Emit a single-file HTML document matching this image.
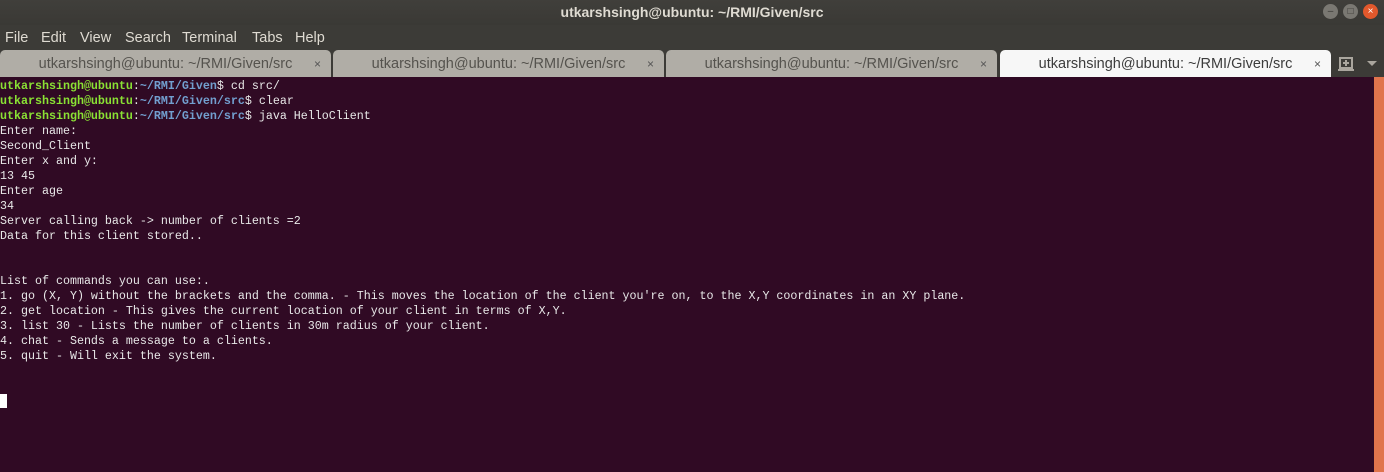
<!DOCTYPE html>
<html><head><style>
*{margin:0;padding:0;box-sizing:border-box}
body{width:1384px;height:472px;overflow:hidden;background:#300a24;font-family:"Liberation Sans",sans-serif;position:relative}
#title{position:absolute;left:0;top:0;width:1384px;height:25px;background:linear-gradient(#403f3b,#3a3935);color:#dfdbd2;font-weight:bold;font-size:14px;text-align:center;line-height:24px}
#menu{position:absolute;left:0;top:25px;width:1384px;height:52px;background:#3c3b37}
#menu span{position:absolute;top:5px;color:#dfdbd2;font-size:14.5px}
.tab{position:absolute;top:50px;height:27px;width:331px;background:#b0ada6;border-radius:5px 5px 0 0;color:#55534e;font-size:14.5px;line-height:28px;text-align:center}
.tab.act{background:#f7f7f7;color:#3c3c3c}
.tab .x{position:absolute;right:10px;top:0;font-size:12px;color:#555}
#term{position:absolute;left:0;top:79px;font-family:"Liberation Mono",monospace;font-size:11.67px;line-height:15px;color:#e8e8e8;white-space:pre}
.g{color:#8ae234;font-weight:bold}.b{color:#729fcf;font-weight:bold}
#sb{position:absolute;left:1374px;top:77px;width:10px;height:395px;background:#e0744c}
.wb{position:absolute;top:4px;width:15px;height:15px;border-radius:50%;background:#7a7872;color:#3a3935;font-size:10px;text-align:center;line-height:15px}
</style></head><body>
<div id="title">utkarshsingh@ubuntu: ~/RMI/Given/src</div>
<div class="wb" style="left:1323px">&#8211;</div>
<div class="wb" style="left:1343px">&#9633;</div>
<div class="wb" style="left:1363px;background:#e2582c;color:#fff">&#215;</div>
<div id="menu">
<span style="left:5px">File</span><span style="left:41px">Edit</span><span style="left:80px">View</span><span style="left:125px">Search</span><span style="left:182px">Terminal</span><span style="left:252px">Tabs</span><span style="left:295px">Help</span>
</div>
<div class="tab" style="left:0">utkarshsingh@ubuntu: ~/RMI/Given/src<span class="x">&#215;</span></div>
<div class="tab" style="left:333px">utkarshsingh@ubuntu: ~/RMI/Given/src<span class="x">&#215;</span></div>
<div class="tab" style="left:666px">utkarshsingh@ubuntu: ~/RMI/Given/src<span class="x">&#215;</span></div>
<div class="tab act" style="left:1000px">utkarshsingh@ubuntu: ~/RMI/Given/src<span class="x">&#215;</span></div>
<svg style="position:absolute;left:1338px;top:55px" width="40" height="18"><rect x="2" y="3" width="12" height="10" fill="none" stroke="#aaa69e" stroke-width="2"/><path d="M8 5v6M5 8h6M0 15h16" stroke="#aaa69e" stroke-width="2"/><path d="M29 6h10l-5 5z" fill="#aaa69e"/></svg>
<div id="term"><span class="g">utkarshsingh@ubuntu</span>:<span class="b">~/RMI/Given</span>$ cd src/
<span class="g">utkarshsingh@ubuntu</span>:<span class="b">~/RMI/Given/src</span>$ clear
<span class="g">utkarshsingh@ubuntu</span>:<span class="b">~/RMI/Given/src</span>$ java HelloClient
Enter name:
Second_Client
Enter x and y:
13 45
Enter age
34
Server calling back -&gt; number of clients =2
Data for this client stored..


List of commands you can use:.
1. go (X, Y) without the brackets and the comma. - This moves the location of the client you're on, to the X,Y coordinates in an XY plane.
2. get location - This gives the current location of your client in terms of X,Y.
3. list 30 - Lists the number of clients in 30m radius of your client.
4. chat - Sends a message to a clients.
5. quit - Will exit the system.


<span style="background:#fff">&#160;</span></div>
<div id="sb"></div>
</body></html>
